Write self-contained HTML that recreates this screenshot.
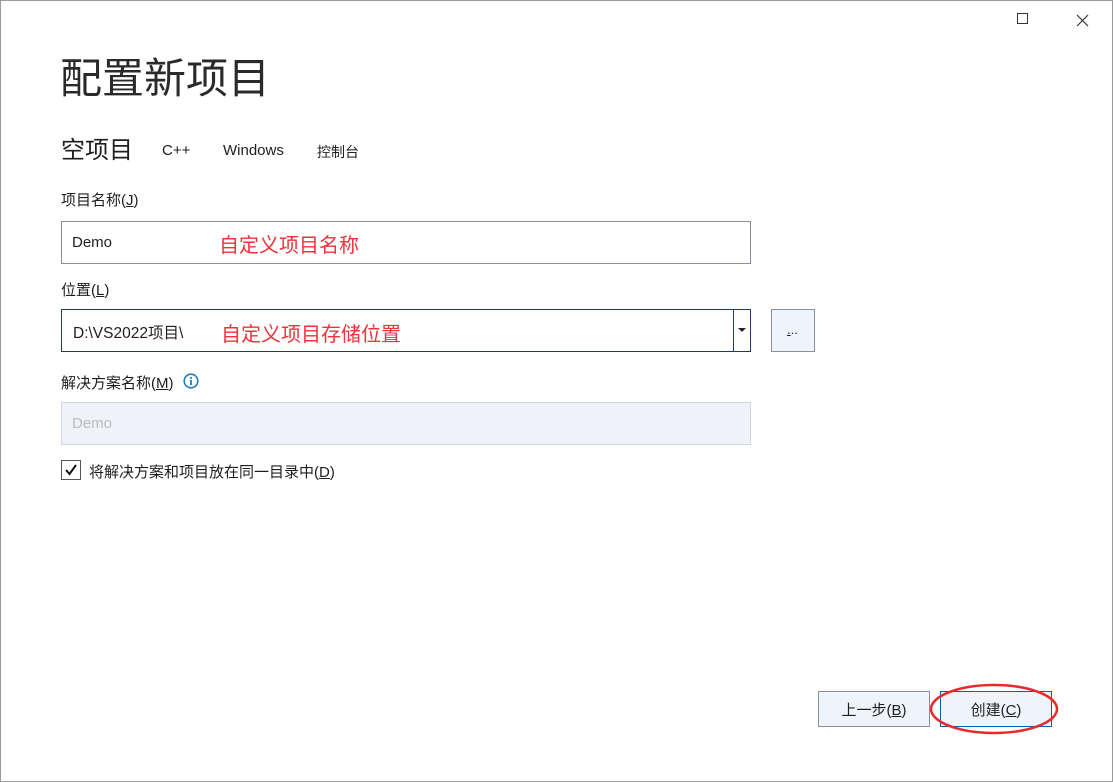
<!DOCTYPE html>
<html><head><meta charset="utf-8"><style>
body{margin:0;width:1113px;height:782px;background:#fff;font-family:"Liberation Sans","Noto Sans CJK SC",sans-serif;color:#1e1e1e;position:relative;overflow:hidden}
.win{position:absolute;left:0;top:0;width:1111px;height:780px;border:1px solid #9a9a9a}
.a{position:absolute;white-space:nowrap}
.box{position:absolute;box-sizing:border-box}
u{text-decoration:underline}
</style></head><body>
<div class="win"></div>
<div class="a" style="left:1017px;top:13px;width:11px;height:11px;border:1px solid #333;box-sizing:border-box"></div>
<svg class="a" style="left:1076px;top:14px" width="13" height="13"><path d="M1 1L12 12M12 1L1 12" stroke="#333" stroke-width="1.2"/></svg>
<div class="a" style="left:60px;top:52px;font-size:42px;line-height:54px;color:#2a2a2a">配置新项目</div>
<div class="a" style="left:61px;top:135px;font-size:24px;line-height:32px">空项目</div>
<div class="a" style="left:162px;top:142px;font-size:15px">C++</div>
<div class="a" style="left:223px;top:142px;font-size:15px">Windows</div>
<div class="a" style="left:317px;top:142px;font-size:14px">控制台</div>
<div class="a" style="left:61px;top:189px;font-size:15px">项目名称(<u>J</u>)</div>
<div class="box" style="left:61px;top:221px;width:690px;height:43px;border:1px solid #8a8f99"></div>
<div class="a" style="left:72px;top:234px;font-size:15px">Demo</div>
<div class="a" style="left:219px;top:229px;font-size:20px;color:#f0323a">自定义项目名称</div>
<div class="a" style="left:61px;top:279px;font-size:15px">位置(<u>L</u>)</div>
<div class="box" style="left:61px;top:309px;width:690px;height:43px;border:1px solid #1f3a6e"></div>
<div class="a" style="left:733px;top:310px;width:1px;height:41px;background:#1f3a6e"></div>
<svg class="a" style="left:737px;top:327px" width="10" height="6"><path d="M1 1H9L5 5Z" fill="#222"/></svg>
<div class="a" style="left:73px;top:321px;font-size:15.5px">D:\VS2022项目\</div>
<div class="a" style="left:221px;top:318px;font-size:20px;color:#f0323a">自定义项目存储位置</div>
<div class="box" style="left:771px;top:309px;width:44px;height:43px;border:1px solid #8a8f99;background:#eef4fb"></div>
<div class="a" style="left:787px;top:322px;font-size:13px"><u>.</u>..</div>
<div class="a" style="left:61px;top:372px;font-size:15px">解决方案名称(<u>M</u>)</div>
<svg class="a" style="left:183px;top:373px" width="16" height="16"><circle cx="8" cy="8" r="6.8" fill="none" stroke="#1a7fc0" stroke-width="1.6"/><rect x="7.1" y="7" width="1.8" height="5" fill="#1a7fc0"/><rect x="7.1" y="4" width="1.8" height="1.8" fill="#1a7fc0"/></svg>
<div class="box" style="left:61px;top:402px;width:690px;height:43px;border:1px solid #d2d6dd;background:#eff2f8"></div>
<div class="a" style="left:72px;top:415px;font-size:15px;color:#b8bcc4">Demo</div>
<div class="box" style="left:61px;top:460px;width:20px;height:20px;border:1px solid #555"></div>
<svg class="a" style="left:64px;top:463px" width="14" height="14"><path d="M2 7L5.5 11L12 2" fill="none" stroke="#111" stroke-width="2"/></svg>
<div class="a" style="left:89px;top:461px;font-size:15px">将解决方案和项目放在同一目录中(<u>D</u>)</div>
<div class="box" style="left:818px;top:691px;width:112px;height:36px;border:1px solid #8a8f99;background:#eef4fb"></div>
<div class="a" style="left:818px;top:699px;width:112px;text-align:center;font-size:15px">上一步(<u>B</u>)</div>
<div class="box" style="left:940px;top:691px;width:112px;height:36px;border:1px solid #0063b1;background:#eef4fb"></div>
<div class="a" style="left:940px;top:699px;width:112px;text-align:center;font-size:15px">创建(<u>C</u>)</div>
<svg class="a" style="left:928px;top:682px" width="134" height="56"><ellipse cx="66" cy="27" rx="63" ry="24" fill="none" stroke="#e82a2a" stroke-width="2.5"/></svg>
</body></html>
